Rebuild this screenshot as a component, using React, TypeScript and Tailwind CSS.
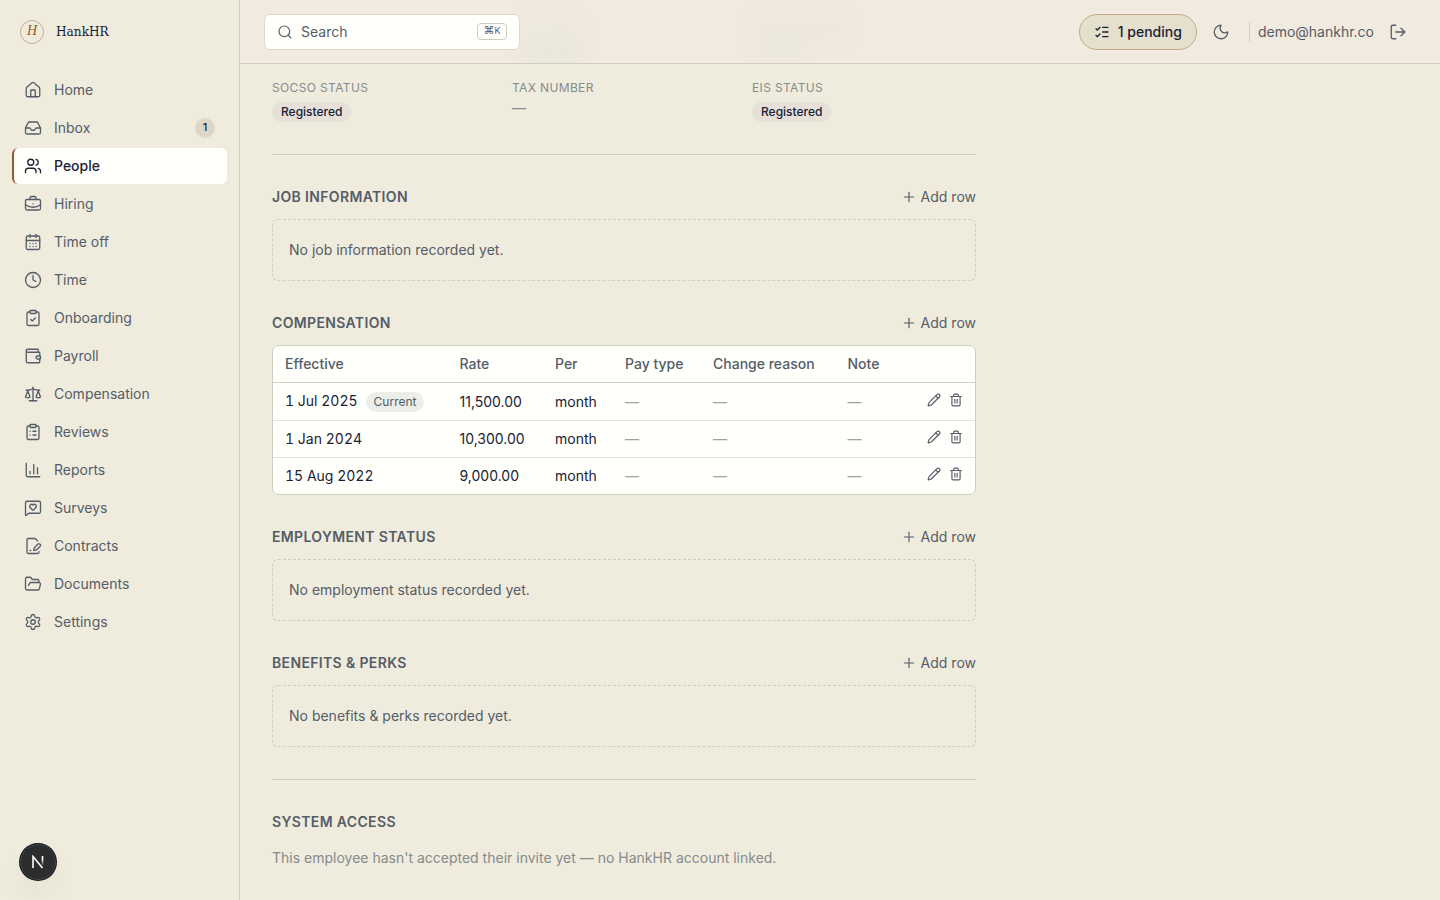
import {
  BriefcaseBusiness,
  CalendarDays,
  ChartColumn,
  ClipboardCheck,
  ClipboardList,
  Clock,
  FilePenLine,
  FolderOpen,
  House,
  Inbox,
  ListChecks,
  LogOut,
  MessageSquareHeart,
  Moon,
  Pencil,
  Plus,
  Scale,
  Search,
  Settings,
  Trash2,
  Users,
  Wallet,
} from 'lucide-react';
import type { LucideIcon } from 'lucide-react';
import type { ReactNode } from 'react';

interface NavItem {
  label: string;
  icon: LucideIcon;
  badge?: number;
  active?: boolean;
}

const NAV_ITEMS: NavItem[] = [
  { label: 'Home', icon: House },
  { label: 'Inbox', icon: Inbox, badge: 1 },
  { label: 'People', icon: Users, active: true },
  { label: 'Hiring', icon: BriefcaseBusiness },
  { label: 'Time off', icon: CalendarDays },
  { label: 'Time', icon: Clock },
  { label: 'Onboarding', icon: ClipboardCheck },
  { label: 'Payroll', icon: Wallet },
  { label: 'Compensation', icon: Scale },
  { label: 'Reviews', icon: ClipboardList },
  { label: 'Reports', icon: ChartColumn },
  { label: 'Surveys', icon: MessageSquareHeart },
  { label: 'Contracts', icon: FilePenLine },
  { label: 'Documents', icon: FolderOpen },
  { label: 'Settings', icon: Settings },
];

const COMPENSATION = [
  { effective: '1 Jul 2025', current: true, rate: '11,500.00', per: 'month' },
  { effective: '1 Jan 2024', current: false, rate: '10,300.00', per: 'month' },
  { effective: '15 Aug 2022', current: false, rate: '9,000.00', per: 'month' },
];

export default function App() {
  return (
    <div className="flex h-[900px] w-[1440px] overflow-hidden bg-[#efebdd] font-['Inter',sans-serif] text-sm text-[#555d68]">
      <Sidebar />
      <div className="flex min-w-0 flex-1 flex-col">
        <TopBar />
        <main className="w-[768px] px-8">
          <dl className="grid h-[91px] grid-cols-3 gap-x-4 border-b border-[#d0cebf] pt-4">
            <Field label="SOCSO status">
              <StatusPill />
            </Field>
            <Field label="Tax number">
              <span className="block leading-5 text-[#858c8d]">—</span>
            </Field>
            <Field label="EIS status">
              <StatusPill />
            </Field>
          </dl>
          <div className="flex flex-col gap-8 border-b border-[#d0cebf] py-8">
            <Section title="Job information">
              <EmptyState body="No job information recorded yet." />
            </Section>
            <Section title="Compensation">
              <CompensationTable />
            </Section>
            <Section title="Employment status">
              <EmptyState body="No employment status recorded yet." />
            </Section>
            <Section title="Benefits & perks">
              <EmptyState body="No benefits & perks recorded yet." />
            </Section>
          </div>
          <section className="pt-8">
            <h2 className="text-sm leading-5 font-semibold tracking-[0.35px] uppercase">System access</h2>
            <p className="mt-4 leading-5 text-[#858c8d]">
              This employee hasn't accepted their invite yet — no HankHR account linked.
            </p>
          </section>
        </main>
      </div>
      <DevBadge />
    </div>
  );
}

function Sidebar() {
  return (
    <aside className="w-60 shrink-0 border-r border-[#d0cebf]">
      <div className="flex h-16 items-center gap-3 pl-5 font-['DejaVu_Serif_Condensed','DejaVu_Serif',serif]">
        <span className="flex size-6 items-center justify-center rounded-full border border-[#c9ae8c] pb-0.5 font-['Liberation_Serif',serif] text-[14px] text-[#98562c] italic">
          H
        </span>
        <span className="text-[13.5px] text-[#1a2233]">HankHR</span>
      </div>
      <nav className="flex flex-col gap-0.5 px-3 pt-2">
        {NAV_ITEMS.map(({ label, icon: Icon, badge, active }) => (
          <a
            key={label}
            className={`flex h-9 items-center gap-3 rounded-md border-l-2 px-2.5 ${
              active ? 'border-[#98562c] bg-[#fffffc] font-medium text-[#1a2233]' : 'border-transparent'
            }`}
          >
            <Icon size={18} strokeWidth={1.75} />
            <span className="flex-1">{label}</span>
            {badge ? (
              <span className="mr-0.5 flex size-5 items-center justify-center rounded-full bg-[#dcd7c6] text-[11px] font-medium text-[#1a2233]">
                {badge}
              </span>
            ) : null}
          </a>
        ))}
      </nav>
    </aside>
  );
}

function TopBar() {
  return (
    <header className="relative flex h-16 shrink-0 items-center justify-between overflow-hidden border-b border-[#d0cebf] bg-[#f1eadf] px-6">
      {/* Scrolled content showing faintly through the frosted bar */}
      <div className="absolute top-11 left-[280px] h-5 w-16 rounded-full bg-[#e5e5d8] opacity-70 blur-[8px]" />
      <div className="absolute top-5 left-[276px] h-6 w-16 rounded-full bg-[#eae8da] opacity-60 blur-[8px]" />
      <div className="absolute top-5 left-[512px] h-4 w-[96px] rounded-full bg-[#e9e7d9] opacity-60 blur-[8px]" />
      <div className="absolute top-10 left-[512px] h-4 w-14 rounded-full bg-[#e6e6d9] opacity-60 blur-[8px]" />
      <button className="relative flex h-9 w-64 items-center gap-2 rounded-md border border-[#dcd9cb] bg-[#fffffc] px-3">
        <Search size={16} strokeWidth={1.75} />
        <span>Search</span>
        <kbd className="ml-auto flex h-[17px] w-[30px] items-baseline justify-center rounded border border-[#d0cebf] font-['Inter',sans-serif] text-[9px] leading-[13px]">
          <span className="font-['DejaVu_Sans',sans-serif] text-[11px]">⌘</span>K
        </kbd>
      </button>
      <div className="relative flex items-center">
        <button className="flex h-9 items-center gap-2 rounded-full border border-[#c3aa85] bg-[#e5dfcd] px-3.5 font-medium text-[#1a2233]">
          <ListChecks size={16} strokeWidth={2} />
          1 pending
        </button>
        <Moon size={18} strokeWidth={1.75} className="mx-[15px]" />
        <span className="ml-1 h-5 w-px bg-[#d0cebf]" />
        <span className="ml-2">demo@hankhr.co</span>
        <LogOut size={18} strokeWidth={1.75} className="mr-[9px] ml-[15px]" />
      </div>
    </header>
  );
}

function Field({ label, children }: { label: string; children: ReactNode }) {
  return (
    <div>
      <dt className="text-xs tracking-[0.36px] text-[#858c8d] uppercase">{label}</dt>
      <dd className="mt-0.5">{children}</dd>
    </div>
  );
}

function StatusPill() {
  return (
    <span className="mt-1.5 flex h-5 w-fit items-center rounded-full bg-[#e5e0d8] px-[9px] text-xs font-medium text-[#1a2233]">
      Registered
    </span>
  );
}

function Section({ title, children }: { title: string; children: ReactNode }) {
  return (
    <section>
      <div className="mb-3 flex h-5 items-center justify-between">
        <h2 className="text-sm font-semibold tracking-[0.35px] uppercase">{title}</h2>
        <button className="flex items-center gap-1">
          <Plus size={16} strokeWidth={1.75} />
          Add row
        </button>
      </div>
      {children}
    </section>
  );
}

function EmptyState({ body }: { body: string }) {
  return <div className="rounded-md border border-dashed border-[#d0cebf] px-4 py-5 leading-5">{body}</div>;
}

function CompensationTable() {
  return (
    <div className="overflow-hidden rounded-md border border-[#d0cebf] bg-[#fffffc]">
      <table className="w-full table-fixed border-separate border-spacing-0 text-left leading-5">
        <colgroup>
          <col className="w-[174.5px]" />
          <col className="w-[95.5px]" />
          <col className="w-[70px]" />
          <col className="w-[88px]" />
          <col className="w-[134.5px]" />
          <col className="w-[60px]" />
          <col />
        </colgroup>
        <thead>
          <tr className="h-[37px] *:border-b *:border-[#d0cebf]">
            <Th>Effective</Th>
            <Th>Rate</Th>
            <Th>Per</Th>
            <Th>Pay type</Th>
            <Th>Change reason</Th>
            <Th>Note</Th>
            <Th />
          </tr>
        </thead>
        <tbody className="text-[#1a2233]">
          {COMPENSATION.map((row) => (
            <tr
              key={row.effective}
              className={`*:border-b *:border-[#e3e2d9] last:*:border-b-0 ${row.current ? 'h-[38px]' : 'h-[37px] last:h-9'}`}
            >
              <td className="pl-3 tabular-nums">
                <div className={`flex items-center ${row.current ? 'pb-px' : ''}`}>
                  {row.effective}
                  {row.current ? (
                    <span className="relative top-px ml-2 flex h-5 items-center rounded-full bg-[#eceeea] px-2 text-xs text-[#555d68]">
                      Current
                    </span>
                  ) : null}
                </div>
              </td>
              <td className="pl-3">{row.rate}</td>
              <td className="pl-3">{row.per}</td>
              <Blank />
              <Blank />
              <Blank />
              <td className="pr-3 pb-1">
                <div className="flex justify-end gap-2 text-[#555d68]">
                  <Pencil size={14} strokeWidth={2} />
                  <Trash2 size={14} strokeWidth={2} />
                </div>
              </td>
            </tr>
          ))}
        </tbody>
      </table>
    </div>
  );
}

function Th({ children }: { children?: ReactNode }) {
  return <th className="pl-3 font-medium">{children}</th>;
}

function Blank() {
  return <td className="pl-3 text-[#a0a5a4]">—</td>;
}

function DevBadge() {
  return (
    <div className="absolute top-[844px] left-5 flex size-9 items-center justify-center rounded-full border border-[#3f4451] bg-[#2d2d2d] shadow-[0_0_0_1px_#171717,0_16px_32px_-8px_rgba(0,0,0,0.14)]">
      <svg width="14" height="14" viewBox="0 0 14 14" fill="none">
        <defs>
          <linearGradient id="stem" x1="0" y1="1" x2="0" y2="13" gradientUnits="userSpaceOnUse">
            <stop offset="0.3" stopColor="#fff" />
            <stop offset="0.8" stopColor="#fff" stopOpacity="0" />
          </linearGradient>
        </defs>
        <path d="M2 13V1.5L11.5 13" stroke="#fff" strokeWidth="1.6" />
        <path d="M11.5 1v10" stroke="url(#stem)" strokeWidth="1.6" />
      </svg>
    </div>
  );
}
